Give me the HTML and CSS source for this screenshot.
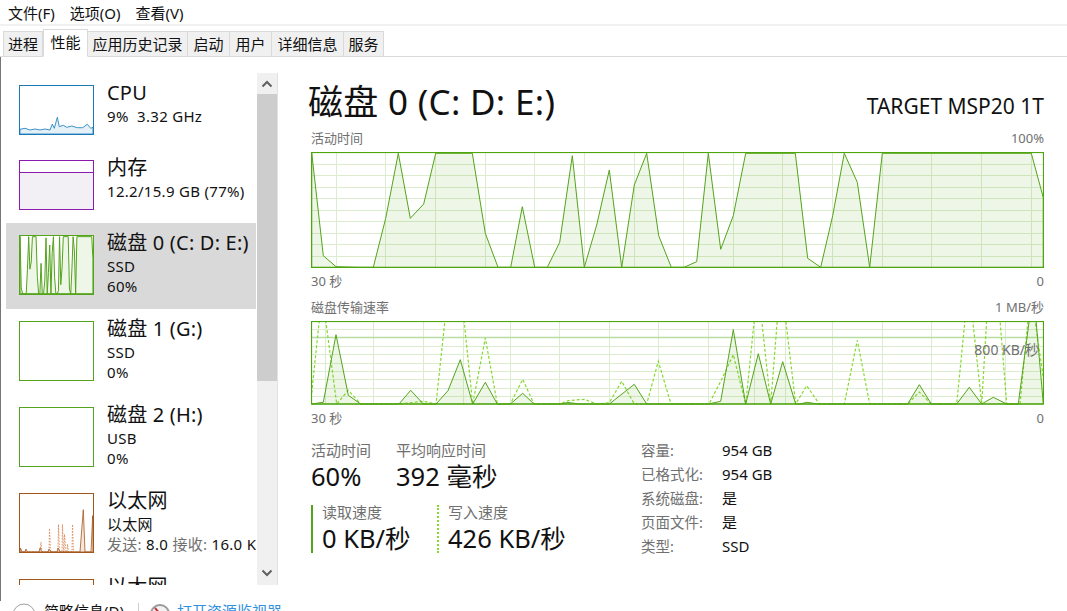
FILE: index.html
```html
<!DOCTYPE html>
<html lang="zh-CN">
<head>
<meta charset="utf-8">
<title>任务管理器</title>
<link rel="stylesheet" href="styles.css">
</head>
<body>
<div class="app">
  <nav class="menu"><span>文件(F)</span><span>选项(O)</span><span>查看(V)</span></nav>
  <div class="tabs">
    <div class="tab w40">进程</div>
    <div class="tab w45 active">性能</div>
    <div class="tab w100">应用历史记录</div>
    <div class="tab w42">启动</div>
    <div class="tab w42">用户</div>
    <div class="tab w72">详细信息</div>
    <div class="tab w40">服务</div>
  </div>
  <div class="content">
    <aside class="sidebar">
      <div class="list">
        <div class="item short">
          <div class="thumb thumb-short cpu">
            <svg viewBox="20 86 73 48" preserveAspectRatio="none"><polygon class="cpu-line" points="20,129.3 25,128.3 30,130 35,129 40,130 45,129 50,130 52.3,124 54.3,128.3 57.3,117.3 59.3,126.7 63.3,125.3 66.7,127.3 71.7,126 77.3,127.7 82.7,127.7 87.3,124.3 90.7,128.3 93,127.3 93,134 20,134"/></svg>
          </div>
          <div class="info"><div class="name">CPU</div><div class="sub">9%&nbsp; 3.32 GHz</div></div>
        </div>
        <div class="item short">
          <div class="thumb thumb-short mem"><div class="mem-fill"></div></div>
          <div class="info"><div class="name">内存</div><div class="sub">12.2/15.9 GB (77%)</div></div>
        </div>
        <div class="item selected">
          <div class="thumb disk">
            <svg viewBox="311 152 733 116" preserveAspectRatio="none"><use href="#disk-area"/></svg>
          </div>
          <div class="info"><div class="name">磁盘 0 (C: D: E:)</div><div class="sub">SSD</div><div class="sub">60%</div></div>
        </div>
        <div class="item">
          <div class="thumb disk"></div>
          <div class="info"><div class="name">磁盘 1 (G:)</div><div class="sub">SSD</div><div class="sub">0%</div></div>
        </div>
        <div class="item">
          <div class="thumb disk"></div>
          <div class="info"><div class="name">磁盘 2 (H:)</div><div class="sub">USB</div><div class="sub">0%</div></div>
        </div>
        <div class="item">
          <div class="thumb net">
            <svg viewBox="20 494 73 59" preserveAspectRatio="none">
              <polyline class="net-dash" points="20,553 40,553 41,543 42,553 49,553 49.5,529 50.5,553 58,553 58.5,525 59.5,553 62,553 62.5,525 63.5,553 64,553 64.5,535 66,553 67,553 67.5,545 68.5,553 72,553 72.5,525 73.5,553"/>
              <polygon class="net-line" points="20,553 20.5,549 22,553 25,553 26,550 27.5,553 39,553 40,549 42,553 48,553 49,550 51,553 57,553 58,549 60,553 80,553 83.3,510 85,553 91,553 92.7,516 93,553"/>
            </svg>
          </div>
          <div class="info"><div class="name">以太网</div><div class="sub">以太网</div><div class="sub"><span class="muted">发送:</span> 8.0 <span class="muted">接收:</span> 16.0 Kbps</div></div>
        </div>
        <div class="item">
          <div class="thumb net"></div>
          <div class="info"><div class="name">以太网</div><div class="sub">以太网</div></div>
        </div>
      </div>
      <div class="scrollbar">
        <div class="sb-btn up"><svg viewBox="0 0 12 8"><polyline points="1.5,6.5 6,2 10.5,6.5"/></svg></div>
        <div class="sb-thumb"></div>
        <div class="sb-track"></div>
        <div class="sb-btn down"><svg viewBox="0 0 12 8"><polyline points="1.5,1.5 6,6 10.5,1.5"/></svg></div>
      </div>
    </aside>
    <main class="main">
      <header class="head">
        <h1 class="title">磁盘 0 (C: D: E:)</h1>
        <div class="model">TARGET MSP20 1T</div>
      </header>
      <div class="chart-label top"><span>活动时间</span><span>100%</span></div>
      <svg class="chart c1" viewBox="311 152 733 116">
        <path class="grid" d="M336.5 152V268M385.5 152V268M435.5 152V268M485.5 152V268M534.5 152V268M584.5 152V268M634.5 152V268M683.5 152V268M733.5 152V268M782.5 152V268M832.5 152V268M882.5 152V268M931.5 152V268M981.5 152V268M1031.5 152V268M311 164.5H1044M311 175.5H1044M311 187.5H1044M311 198.5H1044M311 210.5H1044M311 221.5H1044M311 233.5H1044M311 244.5H1044M311 256.5H1044"/>
        <polygon id="disk-area" class="area" points="311.7,152.7 323.3,255.7 336,266.7 358,267.3 373.3,267.3 385.7,218.3 398.3,153.3 410.3,218.3 423.7,204 435.7,153.3 472.3,153.3 485.3,233.3 498,267.3 510.7,267.3 522.3,206.7 534.7,267.3 547.3,267.3 559.7,242.3 572.3,155.7 584.3,267.3 596.7,225 609.3,170 621.7,267.3 634.3,185 646.7,153.3 658.7,235.7 671.3,267.3 684,267.3 696.7,261.7 708.3,153.3 720.7,249.3 733.3,215.7 745.7,153.3 795.3,153.3 807.7,258.3 820.7,267.3 832.7,215.7 844.3,153.3 857.3,182.3 869.7,267.3 882.3,153.3 1031.3,153.3 1043.3,197.7 1043.3,267.3 311.7,267.3"/>
        <rect class="frame" x="311.5" y="152.5" width="732" height="115"/>
      </svg>
      <div class="chart-label bottom"><span>30 秒</span><span>0</span></div>
      <div class="chart-label second"><span>磁盘传输速率</span><span>1 MB/秒</span></div>
      <div class="chart-wrap">
        <svg class="chart c2" viewBox="311 321 733 84">
          <path class="grid" d="M325.5 321V405M373.5 321V405M423.5 321V405M463.5 321V405M510.5 321V405M559.5 321V405M609.5 321V405M658.5 321V405M708.5 321V405M754.5 321V405M785.5 321V405M832.5 321V405M882.5 321V405M931.5 321V405M1005.5 321V405M311 329.5H1044M311 346.5H1044M311 354.5H1044M311 363.5H1044M311 371.5H1044M311 379.5H1044M311 388.5H1044M311 396.5H1044"/>
          <path class="grid-strong" d="M311 337.5H1044"/>
          <polyline class="dash" points="311.7,393 319.3,320 325.7,320 336.7,404 348.3,390.3 360.7,404 399,404 423.3,401.3 436,404 445,320 464,320 472.7,404 485.3,338 497.3,404 510.3,404 522.7,379.3 534,404 559.7,404 568.3,400.7 584.3,399.3 596.7,404 609.3,402.7 621.7,381.3 634.3,404 646.7,404 658.3,361.3 671,404 709,404 720.7,381.3 733.3,354.7 745.7,404 754.3,320 761.7,320 770.7,404 777.3,320 785.7,320 795.7,404 806.7,385.7 819.3,404 844.3,404 857.3,340.3 869.7,404 907.7,404 919.3,392 931.3,404 956.7,404 965,320 972.7,320 981.7,404 986.7,320 1000,320 1006.7,404 1020,404 1028,320 1035,320 1043.3,378"/>
          <polygon class="area" points="311.7,404 323.3,402.3 336,334.7 348.3,395.3 360.7,404 399,404 410.7,390.3 423.3,404 436,404 448,390.7 460.3,359.7 472.7,404 485.3,382.3 497.3,404 510.3,404 522.7,393.3 534,404 560,404 568,402.5 580,404 609.3,404 634.3,384.3 646.7,404 708.3,404 720.7,401.3 733.3,329.7 745.7,404 758.3,353.7 770.7,404 782.7,361.7 795.7,404 800,404 806.7,402.3 818,404 907.7,404 919.3,384.7 931.3,404 956.7,404 969.3,387.3 981.7,404 993.3,397.3 1006.7,404 1018.3,404 1029.3,320 1036,320 1043.3,404"/>
          <rect class="frame" x="311.5" y="321.5" width="732" height="82.5"/>
        </svg>
        <div class="overlay-label">800 KB/秒</div>
      </div>
      <div class="chart-label bottom"><span>30 秒</span><span>0</span></div>
      <section class="stats">
        <div class="stats-left">
          <div class="stat-row">
            <div class="stat s1"><div class="stat-label">活动时间</div><div class="stat-value">60%</div></div>
            <div class="stat"><div class="stat-label">平均响应时间</div><div class="stat-value">392 毫秒</div></div>
          </div>
          <div class="stat-row rates">
            <div class="stat rate read"><div class="stat-label">读取速度</div><div class="stat-value">0 KB/秒</div></div>
            <div class="stat rate write"><div class="stat-label">写入速度</div><div class="stat-value">426 KB/秒</div></div>
          </div>
        </div>
        <dl class="details">
          <dt>容量:</dt><dd>954 GB</dd>
          <dt>已格式化:</dt><dd>954 GB</dd>
          <dt>系统磁盘:</dt><dd>是</dd>
          <dt>页面文件:</dt><dd>是</dd>
          <dt>类型:</dt><dd>SSD</dd>
        </dl>
      </section>
    </main>
  </div>
  <footer class="footer">
    <svg class="fold" viewBox="0 0 24 24"><circle cx="12" cy="12" r="11"/></svg>
    <span class="fold-text">简略信息(D)</span>
    <span class="sep"></span>
    <svg class="gauge" viewBox="0 0 22 22"><circle class="gauge-ring" cx="11" cy="11" r="9"/><line class="gauge-needle" x1="6" y1="5" x2="12" y2="12"/></svg>
    <span class="link">打开资源监视器</span>
  </footer>
</div>
</body>
</html>
```
FILE: styles.css
```css
* { box-sizing: border-box; }
html, body { margin: 0; height: 100%; background: #fff; overflow: hidden; }
body { font-family: "Noto Sans", "Noto Sans CJK SC", sans-serif; color: #111; }
.app { width: 1067px; height: 611px; display: flex; flex-direction: column; overflow: hidden; }

.menu { height: 26px; flex: none; display: flex; gap: 15px; padding: 2px 0 0 8px; font-size: 15px; line-height: 22px; border-bottom: 2px solid #f1f1f1; }

.tabs { height: 31px; flex: none; display: flex; align-items: flex-end; padding-left: 3px; border-bottom: 1px solid #d9d9d9; }
.tab { height: 26px; margin-bottom: -1px; background: #f0f0f0; border: 1px solid #d9d9d9; border-left-width: 0; font-size: 15px; line-height: 24px; text-align: center; }
.tab:first-child { border-left-width: 1px; }
.tab.active { height: 28px; background: #fff; border-bottom-color: #fff; border-left-width: 1px; line-height: 24px; padding-bottom: 2px; }
.w40 { width: 40px; }
.w45 { width: 45px; }
.w100 { width: 100px; }
.w42 { width: 42px; }
.w72 { width: 72px; }

.content { height: 544px; flex: none; display: flex; border-left: 1px solid #777; }

.sidebar { width: 277px; flex: none; height: 512px; margin-top: 16px; display: flex; padding-left: 5px; }
.list { width: 250px; flex: none; overflow: hidden; }
.item { height: 86px; display: flex; gap: 13px; padding: 12px 0 0 13px; overflow: hidden; }
.item.short { height: 75px; }
.item.selected { background: #d9d9d9; }
.thumb { width: 75px; height: 60px; flex: none; border: 1px solid; background: #fff; overflow: hidden; }
.thumb svg { display: block; width: 100%; height: 100%; }
.thumb-short { height: 50px; }
.cpu { border-color: #1b79b5; }
.cpu-line { fill: #e6f0f7; stroke: #3d93c8; stroke-width: 1; }
.mem { border-color: #8b1bae; padding-top: 11px; }
.mem-fill { height: 100%; background: #f3f0f5; border-top: 1px solid #8b1bae; }
.disk { border-color: #54a31c; --sw: 1; }
.net { border-color: #a3561c; }
.net-line { fill: #f6e8dc; stroke: #a3561c; stroke-width: .8; }
.net-dash { fill: none; stroke: #dc8a5a; stroke-width: 1; stroke-dasharray: 1.5 1.5; }
.info { white-space: nowrap; min-width: 0; }
.name { font-size: 20px; letter-spacing: .2px; line-height: 26px; margin-top: -5px; height: 25.5px; }
.sub { font-size: 15px; letter-spacing: .3px; line-height: 20px; }
.muted { color: #707070; }

.scrollbar { width: 21px; flex: none; margin-left: 1px; display: flex; flex-direction: column; background: #f0f0f0; border-right: 1px solid #e2e2e2; }
.sb-btn { flex: none; display: flex; align-items: center; justify-content: center; }
.sb-btn.up { height: 21px; }
.sb-btn.down { height: 24px; }
.sb-btn svg { width: 12px; height: 8px; fill: none; stroke: #606060; stroke-width: 2; }
.sb-thumb { height: 287px; flex: none; background: #cdcdcd; }
.sb-track { flex: 1; }

.main { flex: 1; min-width: 0; padding: 0 23px 0 33px; display: flex; flex-direction: column; }
.head { height: 75px; flex: none; display: flex; justify-content: space-between; align-items: flex-start; }
.title { margin: 22px 0 0 -3px; font-size: 35px; letter-spacing: .3px; line-height: 46px; font-weight: 400; color: #111; white-space: nowrap; }
.model { margin-top: 36px; font-size: 21px; line-height: 26px; }
.chart-label { display: flex; justify-content: space-between; font-size: 13px; line-height: 18px; color: #707070; }
.chart-label.top { height: 20px; line-height: 12px; }
.chart-label.bottom { height: 20px; padding-top: 4px; }
.chart-label.second { height: 21px; margin-top: 12px; line-height: 15px; }
.chart { display: block; flex: none; width: 733px; }
.c1 { height: 116px; }
.c2 { height: 84px; }
.chart-wrap { position: relative; flex: none; height: 84px; }
.overlay-label { position: absolute; right: 5px; top: 19px; font-size: 14px; line-height: 20px; color: #707070; }
.grid { fill: none; stroke: #dcedcf; stroke-width: 1; }
.grid-strong { fill: none; stroke: #b9dea4; stroke-width: 1.5; }
.area { fill: rgba(84, 163, 28, .1); stroke: #54a31c; stroke-width: var(--sw, 1); stroke-linejoin: round; vector-effect: non-scaling-stroke; }
.dash { fill: none; stroke: #86d82e; stroke-width: 1.2; stroke-dasharray: 3 2; }
.frame { fill: none; stroke: #4da60c; stroke-width: 1.2; }

.stats { display: flex; margin-top: 15px; }
.stats-left { width: 330px; flex: none; }
.stat-row { display: flex; }
.stat-row.rates { margin-top: 13px; }
.s1 { width: 85px; }
.stat-label { font-size: 15px; line-height: 20px; color: #707070; white-space: nowrap; }
.stat-value { font-size: 25.5px; line-height: 32px; white-space: nowrap; }
.rate { height: 48px; padding-left: 9px; width: 126px; }
.rate .stat-label { line-height: 14px; margin-bottom: 3px; }
.read { border-left: 2px solid #54a31c; }
.write { border-left: 2px dotted #86d82e; }
.details { margin: 0; display: grid; grid-template-columns: 81px auto; grid-auto-rows: 24px; font-size: 15px; line-height: 20px; }
.details dt { color: #707070; font-size: 14.5px; }
.details dd { margin: 0; }

.footer { height: 30px; flex: none; display: flex; align-items: flex-start; padding: 2px 0 0 12px; font-size: 15px; line-height: 16px; overflow: hidden; }
.fold { width: 24px; height: 24px; flex: none; fill: #fff; stroke: #a0a0a0; stroke-width: 1; }
.fold-text { margin-left: 8px; width: 94px; flex: none; white-space: nowrap; }
.sep { width: 1px; height: 14px; background: #ccc; flex: none; margin-right: 10px; }
.gauge { width: 22px; height: 22px; flex: none; margin-right: 6px; }
.gauge-ring { fill: #f2f2f2; stroke: #9a9a9a; stroke-width: 2; }
.gauge-needle { stroke: #c8323c; stroke-width: 2; }
.link { color: #2f8fe0; white-space: nowrap; }
```
